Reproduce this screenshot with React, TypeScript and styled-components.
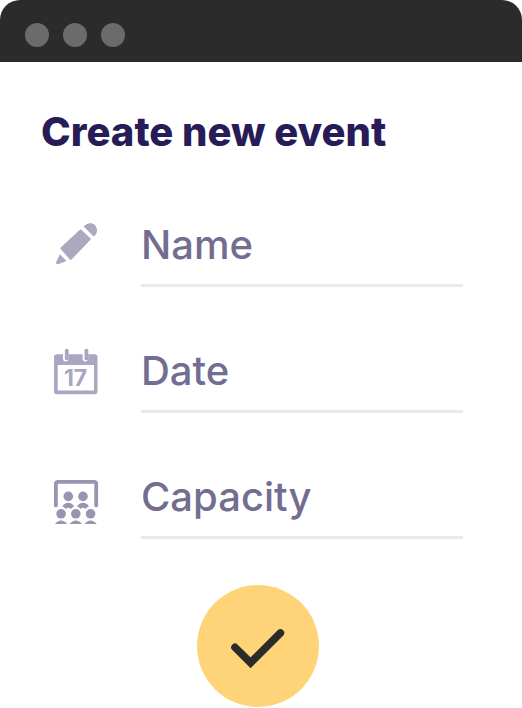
import React from "react";
import styled, { createGlobalStyle } from "styled-components";

const GlobalStyle = createGlobalStyle`
  *, *::before, *::after { box-sizing: border-box; }
  body {
    margin: 0;
    background: #ffffff;
    font-family: Inter, "Liberation Sans", sans-serif;
  }
`;

const Window = styled.main`
  display: flex;
  flex-direction: column;
  background: #ffffff;
`;

const TitleBar = styled.header`
  display: flex;
  align-items: center;
  gap: 14px;
  height: 62px;
  padding: 8px 25px 0;
  border-radius: 20px 20px 0 0;
  background: #2b2b2b;
`;

const Dot = styled.span`
  width: 24px;
  height: 24px;
  border-radius: 50%;
  background: #6b6b6b;
`;

const Heading = styled.h1`
  margin: 0;
  padding: 46px 41px 0;
  font-size: 40px;
  line-height: 48px;
  font-weight: 800;
  color: #271c57;
`;

const Form = styled.form`
  display: flex;
  flex-direction: column;
  padding: 66px 59px 0 53px;
`;

const Fields = styled.div`
  display: flex;
  flex-direction: column;
  gap: 61px;
`;

const Field = styled.label`
  display: grid;
  grid-template-columns: 46px 1fr;
  column-gap: 42px;
`;

const IconArt = styled.svg<{ $tone: string }>`
  display: block;
  width: 46px;
  height: 52px;
  color: ${(p) => p.$tone};
`;

const TextInput = styled.input`
  width: 100%;
  min-width: 0;
  height: 65px;
  padding: 0 0 17px;
  border: 0;
  border-bottom: 3px solid #e9e9eb;
  border-radius: 0;
  outline: none;
  background: transparent;
  font-family: inherit;
  font-size: 40px;
  font-weight: 500;
  color: #271c57;

  &::placeholder {
    color: #736d92;
    opacity: 1;
  }

  &:focus {
    border-bottom-color: #736d92;
  }
`;

const SubmitButton = styled.button`
  align-self: center;
  display: grid;
  place-items: center;
  width: 122px;
  height: 122px;
  margin-top: 46px;
  padding: 0;
  border: 0;
  border-radius: 50%;
  background: #ffd479;
  cursor: pointer;
`;

const PencilIcon = () => (
  <IconArt $tone="#aba8bf" viewBox="0 0 46 52" fill="currentColor" aria-hidden="true">
    <path d="M7 32.2 13.4 39 5 42.2Q2.6 42.6 3.1 40Z" />
    <path d="M8 25.2 26.6 7.9Q27.7 7 28.7 8L37.3 16.2Q38.2 17.1 37.3 18L18.8 37.2Q17.7 38.2 16.7 37.2L8 27.4Q7 26.2 8 25.2Z" />
    <path d="M30.8 4.8C33 1.3 38.6-.2 42 3.2 45.2 6.5 44.5 12 40.7 14.6Z" />
  </IconArt>
);

const CalendarIcon = () => (
  <IconArt $tone="#a9a6c1" viewBox="0 0 46 52" aria-hidden="true">
    <path
      fill="currentColor"
      fillRule="evenodd"
      d="M4 6.3H10V10.8Q10.2 13.4 13 13.6 15.4 13.3 15.6 11V6.3H29.6V10.8Q29.8 13.4 32.6 13.6 35 13.3 35.2 11V6.3H41.5Q44.5 6.3 44.5 9.3V43.3Q44.5 46.3 41.5 46.3H4Q1 46.3 1 43.3V9.3Q1 6.3 4 6.3ZM4.7 17V42.4H41V17Z"
    />
    <path d="M13.8 2.6V10.4M33.4 2.6V10.4" stroke="currentColor" strokeWidth="3.8" strokeLinecap="round" />
    <text
      x="22.6"
      y="38.4"
      textAnchor="middle"
      fontFamily="Inter, sans-serif"
      fontSize="23"
      fontWeight="700"
      fill="currentColor"
    >
      17
    </text>
  </IconArt>
);

const AudienceIcon = () => (
  <IconArt $tone="#9895b1" viewBox="0 0 46 52" fill="currentColor" aria-hidden="true">
    <path
      d="M2.9 31.4V10Q2.9 7.8 5.1 7.8H41Q43.2 7.8 43.2 10V31.4"
      fill="none"
      stroke="currentColor"
      strokeWidth="3.8"
      strokeLinecap="round"
    />
    <circle cx="15.3" cy="22.4" r="4.8" />
    <circle cx="30" cy="22.4" r="4.8" />
    <path d="M9.4 32.4Q11.6 28.8 15.3 28.8T21.2 32.4Q18.8 33 17.9 35Q15.3 32.4 12.8 35Q11.8 33 9.4 32.4Z" />
    <path d="M24.1 32.4Q26.3 28.8 30 28.8T35.9 32.4Q33.5 33 32.6 35Q30 32.4 27.5 35Q26.5 33 24.1 32.4Z" />
    <circle cx="8.1" cy="39.8" r="4.8" />
    <circle cx="22.8" cy="39.8" r="4.8" />
    <circle cx="37.6" cy="39.8" r="4.8" />
    <path d="M2 50Q4.5 46.4 8.1 46.4T14.2 50ZM16.7 50Q19.2 46.4 22.8 46.4T28.9 50ZM31.5 50Q34 46.4 37.6 46.4T43.7 50Z" />
  </IconArt>
);

const CheckIcon = () => (
  <svg width="122" height="122" viewBox="0 0 122 122" aria-hidden="true">
    <path d="M38 62.4 53.6 77.8 83.4 48" fill="none" stroke="#2b2b2b" strokeWidth="7.6" strokeLinecap="round" />
  </svg>
);

const fields = [
  { name: "Name", Icon: PencilIcon },
  { name: "Date", Icon: CalendarIcon },
  { name: "Capacity", Icon: AudienceIcon },
];

export default function App() {
  return (
    <>
      <GlobalStyle />
      <Window>
        <TitleBar>
          <Dot />
          <Dot />
          <Dot />
        </TitleBar>
        <Heading>Create new event</Heading>
        <Form onSubmit={(e) => e.preventDefault()}>
          <Fields>
            {fields.map(({ name, Icon }) => (
              <Field key={name}>
                <Icon />
                <TextInput type="text" name={name.toLowerCase()} placeholder={name} aria-label={name} />
              </Field>
            ))}
          </Fields>
          <SubmitButton type="submit" aria-label="Create event">
            <CheckIcon />
          </SubmitButton>
        </Form>
      </Window>
    </>
  );
}
